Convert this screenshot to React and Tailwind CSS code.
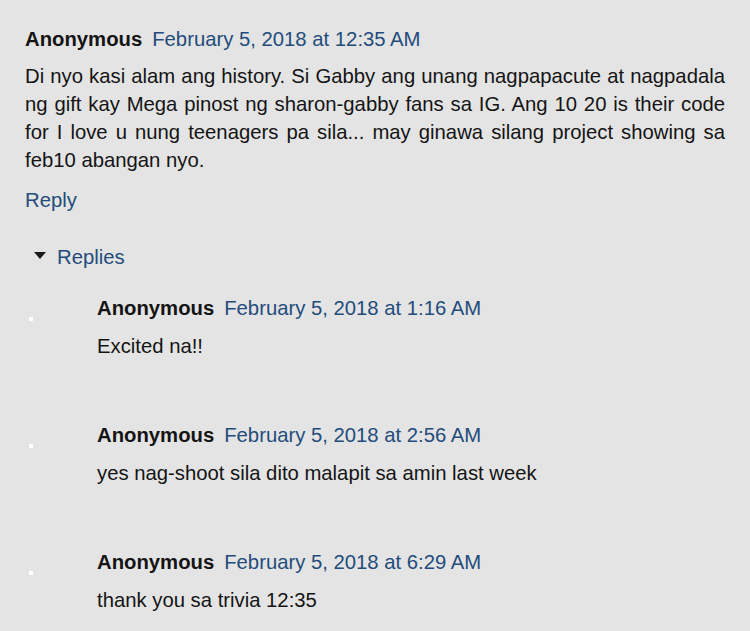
export default function App() {
  const replies = [
    { date: "February 5, 2018 at 1:16 AM", text: "Excited na!!" },
    { date: "February 5, 2018 at 2:56 AM", text: "yes nag-shoot sila dito malapit sa amin last week" },
    { date: "February 5, 2018 at 6:29 AM", text: "thank you sa trivia 12:35" },
  ];
  return (
    <div
      className="w-[750px] h-[631px] overflow-hidden bg-[#e4e4e4] text-[#141414] text-[20.3px] leading-[28px]"
      style={{ fontFamily: '"Liberation Sans", Arial, sans-serif' }}
    >
      <div className="pl-[25px] pr-[25px] pt-[25px]">
        <div className="flex items-baseline gap-[10px]">
          <span className="font-bold">Anonymous</span>
          <span className="text-[#234c7c]">February 5, 2018 at 12:35 AM</span>
        </div>
        <p className="mt-[9px] text-justify">
          Di nyo kasi alam ang history. Si Gabby ang unang nagpapacute at nagpadala ng gift kay Mega pinost ng sharon-gabby fans sa IG. Ang 10 20 is their code for I love u nung teenagers pa sila... may ginawa silang project showing sa feb10 abangan nyo.
        </p>
        <div className="mt-[12px] text-[#234c7c]">Reply</div>
        <div className="mt-[29px] flex items-center gap-[11px] pl-[9px] text-[#234c7c]">
          <svg width="12" height="8" viewBox="0 0 12 8" className="mt-[-2px]">
            <polygon points="0,0 12,0 6,7" fill="#1a1a1a" />
          </svg>
          <span>Replies</span>
        </div>
        <div className="mt-[23px] flex flex-col gap-[61px]">
          {replies.map((r, i) => (
            <div key={i} className="relative pl-[72px]">
              <span className="absolute left-[4px] top-[23px] w-[4px] h-[4px] bg-white" />
              <div className="flex items-baseline gap-[10px]">
                <span className="font-bold">Anonymous</span>
                <span className="text-[#234c7c]">{r.date}</span>
              </div>
              <div className="mt-[10px]">{r.text}</div>
            </div>
          ))}
        </div>
      </div>
    </div>
  );
}
